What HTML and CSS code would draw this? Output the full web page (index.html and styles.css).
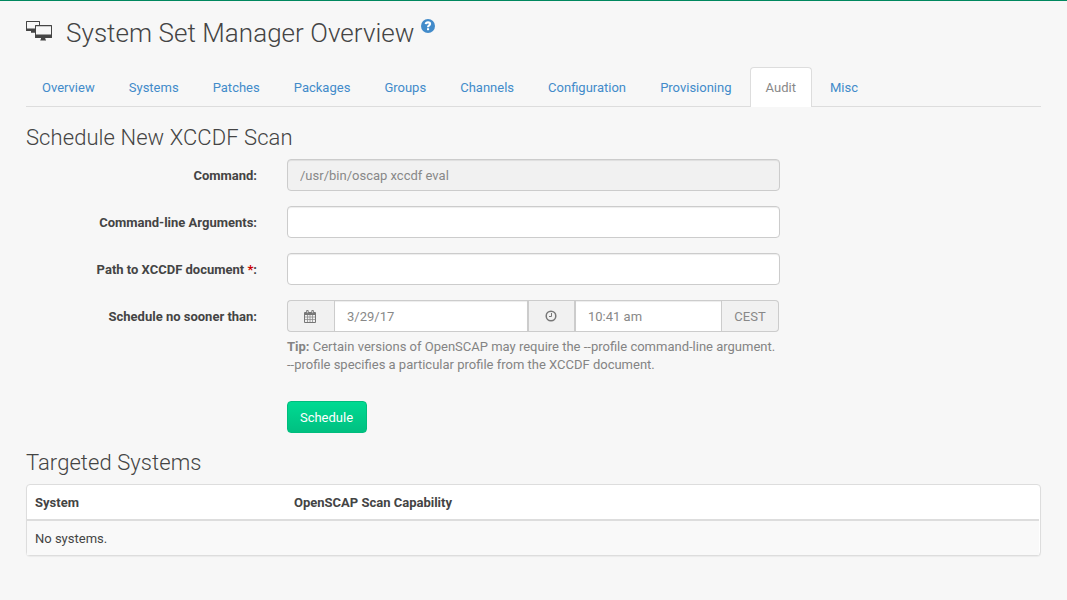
FILE: index.html
```html
<!DOCTYPE html>
<html lang="en">
<head>
<meta charset="utf-8">
<title>System Set Manager Overview</title>
<link rel="stylesheet" href="styles.css">
</head>
<body>
<main class="page">
  <header class="page-header">
    <svg class="system-icon" width="26" height="20" viewBox="0 0 26 20">
      <path fill="#454545" fill-rule="evenodd" d="M.6 0H13.4Q14 0 14 .6V4H13V1H1V7.6H9V11.8H5V10H.6Q0 10 0 9.4V.6Q0 0 .6 0Z"/>
      <path fill="#454545" fill-rule="evenodd" d="M9.6 4H25.4Q26 4 26 4.6V16.4Q26 17 25.4 17H19.3V18.4H20V19.4H14.3V18.4H15V17H9.6Q9 17 9 16.4V4.6Q9 4 9.6 4ZM10 5.2V13.6H25V5.2Z"/>
    </svg>
    <h1 class="page-title">System Set Manager Overview</h1>
    <svg class="help-icon" width="14" height="14" viewBox="0 0 14 14">
      <circle cx="7" cy="7" r="7" fill="#428bca"/>
      <path d="M4.7 5.2Q5 3.4 7 3.4Q9.1 3.4 9.1 5Q9.1 5.9 8 6.5Q7 7.1 7 8.3" fill="none" stroke="#fff" stroke-width="2.1"/>
      <path d="M6 9.2H8.1V11.2H6Z" fill="#fff"/>
    </svg>
  </header>
  <nav class="tabs">
    <a class="tab">Overview</a>
    <a class="tab">Systems</a>
    <a class="tab">Patches</a>
    <a class="tab">Packages</a>
    <a class="tab">Groups</a>
    <a class="tab">Channels</a>
    <a class="tab">Configuration</a>
    <a class="tab">Provisioning</a>
    <a class="tab tab-active">Audit</a>
    <a class="tab">Misc</a>
  </nav>
  <h2 class="section-title">Schedule New XCCDF Scan</h2>
  <form class="form">
    <div class="form-row">
      <label class="label">Command:</label>
      <input class="input input-disabled" type="text" value="/usr/bin/oscap xccdf eval" disabled>
    </div>
    <div class="form-row">
      <label class="label">Command-line Arguments:</label>
      <input class="input" type="text">
    </div>
    <div class="form-row">
      <label class="label">Path to XCCDF document <span class="required">*</span>:</label>
      <input class="input" type="text">
    </div>
    <div class="form-row">
      <label class="label">Schedule no sooner than:</label>
      <div class="field">
        <div class="input-group">
          <span class="addon addon-first">
            <svg width="12" height="13" viewBox="0 0 12 13">
              <path fill="none" stroke="#777" d="M.5 2.5H11.5V12.5H.5ZM.5 4.5H11.5"/>
              <path fill="none" stroke="#888" stroke-width=".75" d="M3.5 5V12M6 5V12M8.5 5V12M1 7H11M1 9.5H11"/>
              <path fill="#777" d="M1 2H11V4.5H1Z"/>
              <path fill="#f1f1f1" stroke="#777" stroke-width=".9" d="M2.6.5H4.2V3.3H2.6ZM7.8.5H9.4V3.3H7.8Z"/>
            </svg>
          </span>
          <input class="input date-input" type="text" value="3/29/17">
          <span class="addon addon-middle">
            <svg width="12" height="12" viewBox="0 0 12 12">
              <circle cx="6" cy="6" r="4.8" fill="none" stroke="#777" stroke-width="1.5"/>
              <path fill="none" stroke="#777" d="M6.5 3V6.5H4"/>
            </svg>
          </span>
          <input class="input time-input" type="text" value="10:41 am">
          <span class="addon addon-last">CEST</span>
        </div>
        <p class="tip"><strong>Tip:</strong> Certain versions of OpenSCAP may require the --profile command-line argument.<br>--profile specifies a particular profile from the XCCDF document.</p>
        <button class="button" type="button">Schedule</button>
      </div>
    </div>
  </form>
  <h2 class="section-title">Targeted Systems</h2>
  <div class="panel">
    <div class="panel-row panel-head"><span>System</span><span>OpenSCAP Scan Capability</span></div>
    <div class="panel-row panel-body"><span>No systems.</span></div>
  </div>
</main>
</body>
</html>
```
FILE: styles.css
```css
* { box-sizing: border-box; }

body {
  margin: 0;
  height: 600px;
  overflow: hidden;
  border-top: 1px solid #00885f;
  background: #f7f7f7;
  color: #444;
  font: 13px/18px Roboto, sans-serif;
}

.page { padding: 14px 26px 0; }

.page-header {
  display: flex;
  align-items: flex-start;
  height: 52px;
}

.system-icon { margin: 6px 14px 0 0; }

.page-title {
  margin: 1px 0 0;
  font-size: 26px;
  font-weight: 300;
  letter-spacing: .05px;
  line-height: 34px;
  white-space: nowrap;
}

.help-icon { margin: 4px 0 0 6px; }

.tabs {
  display: flex;
  gap: 2.07px;
  height: 40px;
  margin-bottom: 18px;
  border-bottom: 1px solid #ddd;
}

.tab {
  height: 40px;
  padding: 11px 15px 10px;
  border: 1px solid transparent;
  border-bottom: 0;
  border-radius: 4px 4px 0 0;
  color: #428bca;
  line-height: 18px;
}

.tab-active {
  border-color: #ddd;
  background: #fff;
  color: #888;
}

.section-title {
  margin: 17px 0 9px;
  font-size: 22px;
  font-weight: 300;
  letter-spacing: .07px;
  line-height: 25px;
}

.form {
  display: flex;
  flex-direction: column;
  gap: 15px;
}

.form-row {
  display: grid;
  grid-template-columns: 231px 493px;
  column-gap: 30px;
}

.label {
  padding-top: 8px;
  font-weight: 700;
  text-align: right;
}

.required { color: #c00; }

.input {
  width: 100%;
  height: 32px;
  margin: 0;
  padding: 6px 12px;
  border: 1px solid #ccc;
  border-radius: 4px;
  background: #fff;
  box-shadow: inset 0 1px 1px rgba(0, 0, 0, .075);
  color: #888;
  font: inherit;
}

.input-disabled { background: #f1f1f1; }

.input-group {
  display: flex;
  width: 492px;
}

.addon {
  display: flex;
  align-items: center;
  justify-content: center;
  flex: none;
  height: 32px;
  border: 1px solid #ccc;
  background: #f1f1f1;
  color: #888;
}

.addon-first {
  width: 47px;
  padding-right: 2px;
  border-right: 0;
  border-radius: 4px 0 0 4px;
}

.addon-middle {
  width: 47px;
  padding-right: 2px;
}

.addon-last {
  width: 57px;
  padding-top: 1px;
  border-left: 0;
  border-radius: 0 4px 4px 0;
}

.date-input {
  width: 194px;
  border-radius: 0;
}

.time-input {
  width: 147px;
  border-radius: 0;
}

.tip {
  margin: 6px 0 27px;
  color: #848484;
  white-space: nowrap;
}

.button {
  display: block;
  width: 80px;
  height: 32px;
  padding: 2px 1px 0 0;
  border: 1px solid #00bd7d;
  border-radius: 4px;
  background: linear-gradient(#00da92, #00c081);
  color: #fff;
  font: inherit;
}

.panel {
  border: 1px solid #ddd;
  border-radius: 4px;
  background: #fff;
  box-shadow: 0 1px 1px rgba(0, 0, 0, .05);
}

.panel-row {
  display: grid;
  grid-template-columns: 259px 1fr;
  margin-right: 1px;
  padding: 8px;
}

.panel-head {
  height: 36px;
  padding-top: 9px;
  border-bottom: 2px solid #ddd;
  font-weight: 700;
}

.panel-body {
  height: 34px;
  padding-top: 9px;
  background: #f9f9f9;
}
```
